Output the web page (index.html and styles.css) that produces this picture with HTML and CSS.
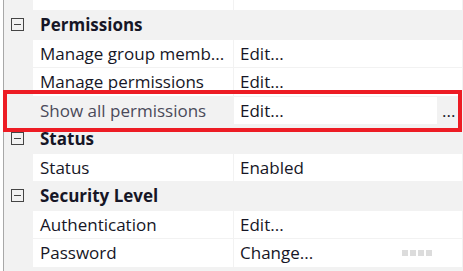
FILE: index.html
```html
<!DOCTYPE html>
<html lang="en">
<head>
    <meta charset="UTF-8">
    <title>Properties</title>
    <link rel="stylesheet" href="styles.css">
</head>
<body>
    <div class="frame">
        <div class="grid">
            <div class="gutter"></div>
            <div class="cell"></div>
            <div class="cell"></div>

            <div class="gutter"><svg class="toggle" width="13" height="13" viewBox="0 0 13 13"><rect x="0.5" y="0.5" width="12" height="12" fill="none" stroke="#454545"/><line x1="3" y1="6.5" x2="10" y2="6.5" stroke="#454545"/></svg></div>
            <div class="group">Permissions</div>

            <div class="gutter"></div>
            <div class="cell name">Manage group memb...</div>
            <div class="cell value">Edit...</div>

            <div class="gutter"></div>
            <div class="cell name">Manage permissions</div>
            <div class="cell value">Edit...</div>

            <div class="gutter"></div>
            <div class="cell name selected">Show all permissions</div>
            <div class="cell value editing"><span class="editor">Edit...</span><span class="more">...</span></div>

            <div class="gutter"><svg class="toggle" width="13" height="13" viewBox="0 0 13 13"><rect x="0.5" y="0.5" width="12" height="12" fill="none" stroke="#454545"/><line x1="3" y1="6.5" x2="10" y2="6.5" stroke="#454545"/></svg></div>
            <div class="group">Status</div>

            <div class="gutter"></div>
            <div class="cell name">Status</div>
            <div class="cell value">Enabled</div>

            <div class="gutter"><svg class="toggle" width="13" height="13" viewBox="0 0 13 13"><rect x="0.5" y="0.5" width="12" height="12" fill="none" stroke="#454545"/><line x1="3" y1="6.5" x2="10" y2="6.5" stroke="#454545"/></svg></div>
            <div class="group">Security Level</div>

            <div class="gutter"></div>
            <div class="cell name">Authentication</div>
            <div class="cell value">Edit...</div>

            <div class="gutter"></div>
            <div class="cell name">Password</div>
            <div class="cell value">Change...<span class="dots"><i></i><i></i><i></i><i></i></span></div>
        </div>
        <div class="highlight"></div>
    </div>
</body>
</html>
```

FILE: styles.css
```css
body {
    margin: 0;
    background: #ffffff;
    font-family: "Open Sans", "Noto Sans", sans-serif;
    font-size: 17px;
    color: #161626;
}
.frame {
    position: relative;
    width: 463px;
    height: 271px;
    overflow: hidden;
}
.grid {
    margin-left: 3px;
    height: 271px;
    border-left: 1px solid #a8a8a8;
    background: #f2f2f2;
    display: grid;
    grid-template-columns: 28px 200px 228px;
    grid-template-rows: 10px repeat(9, 27.5px);
    column-gap: 1px;
    row-gap: 1px;
    padding-right: 1px;
}
.gutter {
    display: flex;
    align-items: center;
    padding-left: 7px;
}
.cell {
    background: #ffffff;
    display: flex;
    align-items: center;
    white-space: nowrap;
    overflow: hidden;
}
.name {
    padding-left: 7px;
}
.value {
    padding-left: 6px;
}
.group {
    grid-column: span 2;
    display: flex;
    align-items: center;
    padding-left: 7px;
    font-weight: 700;
}
/* selected row */
.selected {
    background: #f2f2f2;
    color: #4a4a5a;
}
.editing {
    padding-left: 0;
    background: #f2f2f2;
}
.editor {
    background: #ffffff;
    align-self: stretch;
    display: flex;
    align-items: center;
    padding-left: 6px;
    width: 197px;
}
.more {
    margin-left: 5px;
}
.dots {
    display: flex;
    gap: 2px;
    margin-left: auto;
    margin-right: 30px;
}
.dots i {
    width: 6px;
    height: 6px;
    background: #dcdcdc;
}
/* annotation box */
.highlight {
    position: absolute;
    left: 3px;
    top: 90px;
    width: 451px;
    height: 34px;
    border: 4px solid #ed1c24;
}
```
